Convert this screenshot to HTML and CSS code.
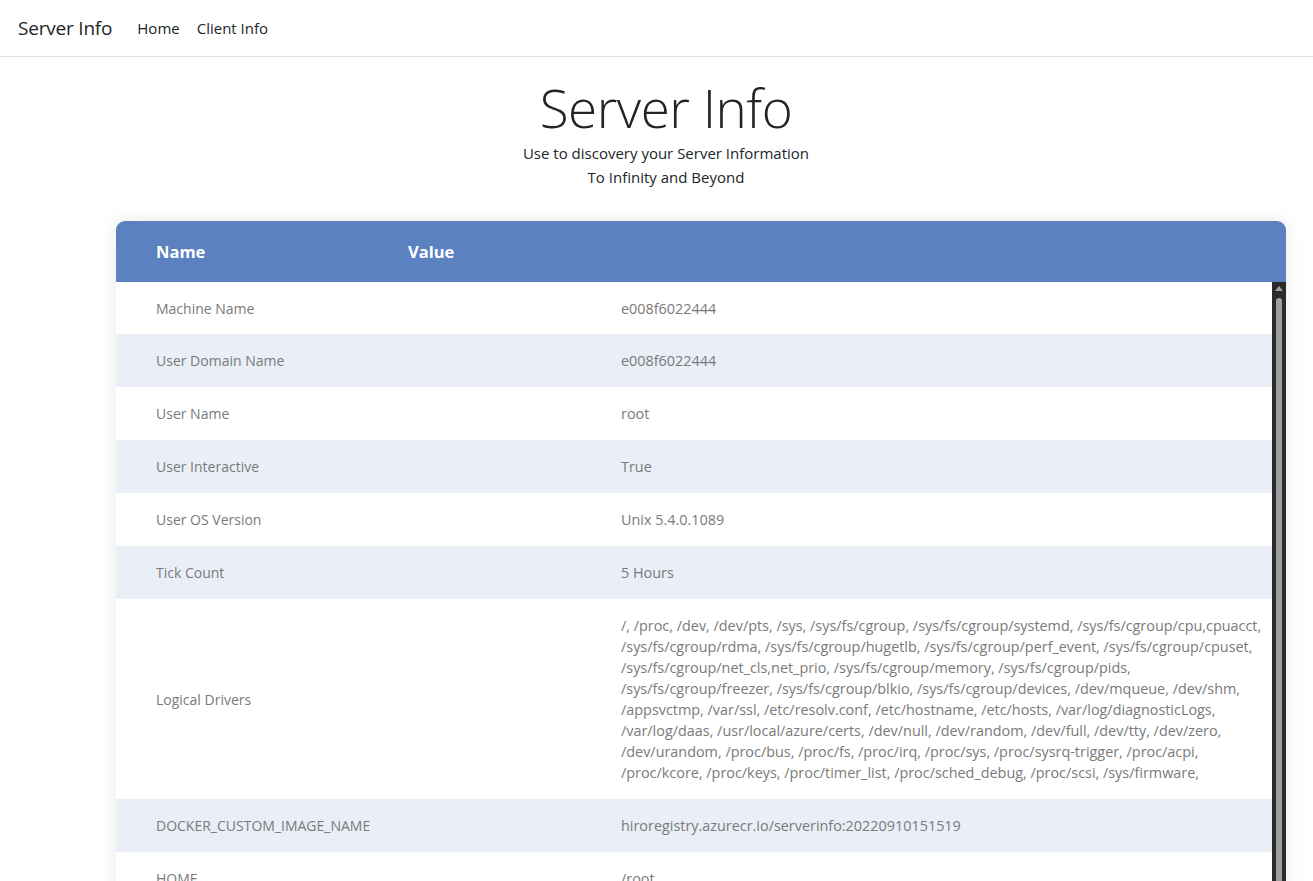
FILE: index.html
```html
<!DOCTYPE html>
<html lang="en">
<head>
<meta charset="utf-8">
<title>Server Info</title>
<link rel="stylesheet" href="styles.css">
</head>
<body>
<header class="navbar">
  <a class="brand" href="#">Server Info</a>
  <nav class="nav">
    <a href="#">Home</a>
    <a href="#">Client Info</a>
  </nav>
</header>
<main class="main">
  <section class="hero">
    <h1 class="title">Server Info</h1>
    <p class="sub">Use to discovery your Server Information</p>
    <p class="sub">To Infinity and Beyond</p>
  </section>
  <section class="card">
    <div class="thead">
      <div class="th th-name">Name</div>
      <div class="th">Value</div>
    </div>
    <div class="tbody">
      <div class="rows">
        <div class="row first"><div class="c-name">Machine Name</div><div class="c-val">e008f6022444</div></div>
        <div class="row alt"><div class="c-name">User Domain Name</div><div class="c-val">e008f6022444</div></div>
        <div class="row"><div class="c-name">User Name</div><div class="c-val">root</div></div>
        <div class="row alt"><div class="c-name">User Interactive</div><div class="c-val">True</div></div>
        <div class="row"><div class="c-name">User OS Version</div><div class="c-val">Unix 5.4.0.1089</div></div>
        <div class="row alt"><div class="c-name">Tick Count</div><div class="c-val">5 Hours</div></div>
        <div class="row"><div class="c-name">Logical Drivers</div><div class="c-val">/, /proc, /dev, /dev/pts, /sys, /sys/fs/cgroup, /sys/fs/cgroup/systemd, /sys/fs/cgroup/cpu,cpuacct,<br>/sys/fs/cgroup/rdma, /sys/fs/cgroup/hugetlb, /sys/fs/cgroup/perf_event, /sys/fs/cgroup/cpuset,<br>/sys/fs/cgroup/net_cls,net_prio, /sys/fs/cgroup/memory, /sys/fs/cgroup/pids,<br>/sys/fs/cgroup/freezer, /sys/fs/cgroup/blkio, /sys/fs/cgroup/devices, /dev/mqueue, /dev/shm,<br>/appsvctmp, /var/ssl, /etc/resolv.conf, /etc/hostname, /etc/hosts, /var/log/diagnosticLogs,<br>/var/log/daas, /usr/local/azure/certs, /dev/null, /dev/random, /dev/full, /dev/tty, /dev/zero,<br>/dev/urandom, /proc/bus, /proc/fs, /proc/irq, /proc/sys, /proc/sysrq-trigger, /proc/acpi,<br>/proc/kcore, /proc/keys, /proc/timer_list, /proc/sched_debug, /proc/scsi, /sys/firmware,</div></div>
        <div class="row alt"><div class="c-name">DOCKER_CUSTOM_IMAGE_NAME</div><div class="c-val">hiroregistry.azurecr.io/serverinfo:20220910151519</div></div>
        <div class="row"><div class="c-name">HOME</div><div class="c-val">/root</div></div>
        <div class="row alt"><div class="c-name">HOSTNAME</div><div class="c-val">e008f6022444</div></div>
      </div>
      <div class="scrollbar">
        <span class="arrow"></span>
        <span class="thumb"></span>
      </div>
    </div>
  </section>
</main>
</body>
</html>
```
FILE: styles.css
```css
* { box-sizing: border-box; }
html, body { margin: 0; height: 100%; }
body {
  overflow: hidden;
  background: #fff;
  font-family: "Open Sans", "Noto Sans", sans-serif;
  color: #212529;
}
a { text-decoration: none; color: inherit; }

.navbar {
  height: 57px;
  border-bottom: 1px solid #e3e3e3;
  display: flex;
  align-items: center;
  padding: 0 18px;
}
.brand {
  font-size: 19px;
  color: #212529;
  margin-right: 25px;
  letter-spacing: -0.2px;
}
.nav { display: flex; gap: 17px; }
.nav a { font-size: 15px; color: #212529; }

.main { padding: 0 27px 0 116px; }

.hero { text-align: center; padding-top: 18px; margin-left: -97px; margin-right: -27px; }
.title {
  margin: 0;
  font-weight: 300;
  font-size: 53px;
  line-height: 66px;
  color: #212529;
  letter-spacing: -0.5px;
}
.sub { margin: 0; font-size: 15px; line-height: 24px; }

.card {
  margin-top: 32px;
  border-radius: 9px 9px 0 0;
  overflow: hidden;
  box-shadow: 0 0 18px rgba(0,0,0,0.09);
  background: #fff;
}
.thead {
  height: 61px;
  background: #5b81c0;
  display: flex;
  align-items: center;
  color: #fff;
  font-weight: 700;
  font-size: 16.5px;
}
.th-name { width: 292px; padding-left: 40px; }

.tbody { display: flex; height: 700px; }
.rows { flex: 1; }
.row { display: flex; padding: 16px 0; line-height: 21px; font-size: 14px; color: #7a7a7a; align-items: center; }
.row.first { padding: 15.5px 0 15.5px; }
.row.alt { background: #e9eef7; }
.c-name { width: 505px; padding-left: 40px; flex: none; }
.c-val { flex: 1; white-space: nowrap; font-size: 14.4px; }

.scrollbar {
  width: 14px;
  flex: none;
  background: #2b2b2b;
  display: flex;
  flex-direction: column;
  align-items: center;
  padding-top: 4px;
}
.arrow {
  width: 0; height: 0;
  border-left: 4px solid transparent;
  border-right: 4px solid transparent;
  border-bottom: 5px solid #a3a3a3;
}
.thumb {
  margin-top: 7px;
  width: 6px;
  flex: 1;
  background: #9f9f9f;
  border-radius: 3px;
}
```
